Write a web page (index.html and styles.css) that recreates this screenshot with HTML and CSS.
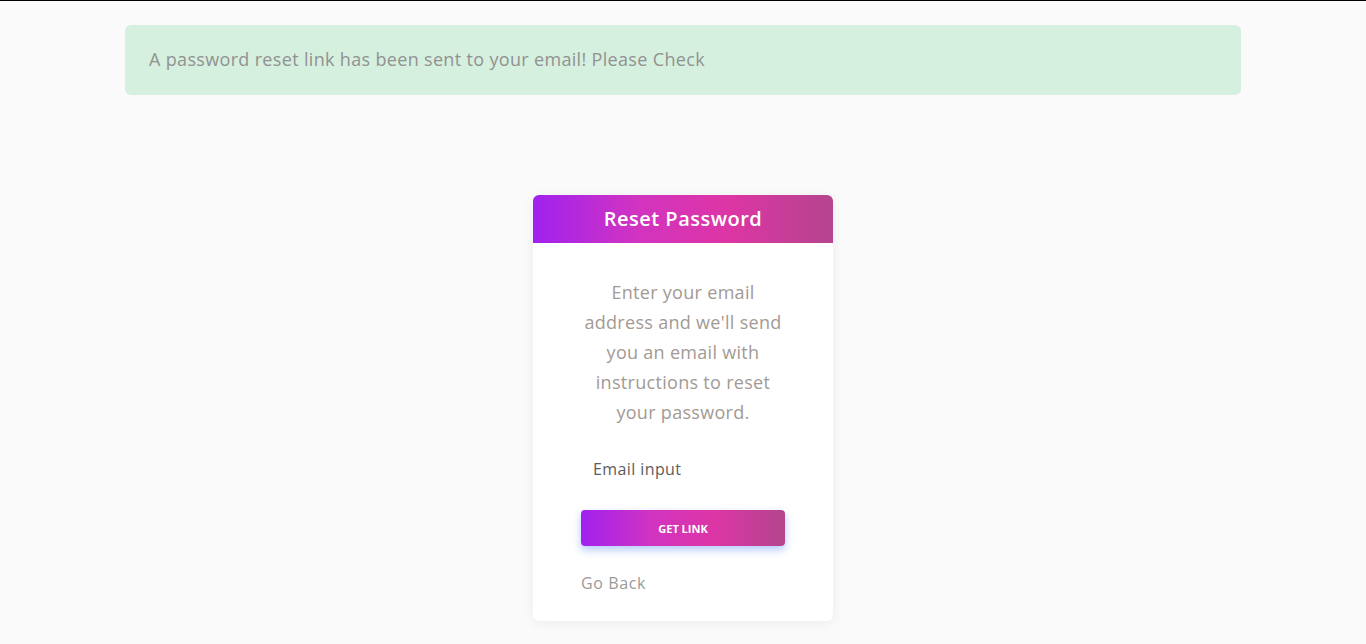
FILE: index.html
```html
<!DOCTYPE html>
<html lang="en">
<head>
<meta charset="utf-8">
<title>Reset Password</title>
<link rel="stylesheet" href="styles.css">
</head>
<body>
<div class="topline"></div>
<main class="page">
  <div class="alert">A password reset link has been sent to your email! Please Check</div>
  <section class="card">
    <header class="card-head">Reset Password</header>
    <div class="card-body">
      <p class="intro">Enter your email<br>address and we'll send<br>you an email with<br>instructions to reset<br>your password.</p>
      <div class="field"><span class="field-label">Email input</span></div>
      <button class="btn" type="button">GET LINK</button>
      <a class="back" href="#">Go Back</a>
    </div>
  </section>
</main>
</body>
</html>
```
FILE: styles.css
```css
* { box-sizing: border-box; }
html, body { margin: 0; padding: 0; }
body {
  background: #fafafa;
  font-family: "Open Sans", "Noto Sans", sans-serif;
  height: 644px;
  overflow: hidden;
}
.topline { height: 1px; background: #000; }
.page {
  display: flex;
  flex-direction: column;
  align-items: center;
  padding-top: 24px;
}
.alert {
  width: 1116px;
  height: 70px;
  background: #d5f0de;
  border-radius: 6px;
  color: #929292;
  font-size: 18px;
  letter-spacing: 0.33px;
  padding: 0 24px 2px;
  display: flex;
  align-items: center;
}
.card {
  margin-top: 100px;
  width: 300px;
  background: #fff;
  border-radius: 6px;
  box-shadow: 0 2px 12px rgba(0,0,0,0.06);
  overflow: hidden;
}
.card-head {
  height: 48px;
  display: flex;
  align-items: center;
  justify-content: center;
  color: #fff;
  font-size: 20px;
  font-weight: 600;
  letter-spacing: 0.5px;
  padding-bottom: 2px;
  background: linear-gradient(90deg, #a021ef 0%, #d234c0 35%, #dd35a5 65%, #b4458e 100%);
}
.card-body {
  padding: 34px 48px 27px;
  display: flex;
  flex-direction: column;
}
.intro {
  margin: 0;
  text-align: center;
  color: #a29a94;
  font-size: 18px;
  letter-spacing: 0.3px;
  line-height: 30px;
}
.field {
  margin-top: 24px;
  height: 36px;
  padding: 0 12px;
  display: flex;
  align-items: center;
  color: #5c5c5c;
  font-size: 16px;
  letter-spacing: 0.4px;
}
.btn {
  margin-top: 23px;
  height: 36px;
  border: 0;
  border-radius: 4px;
  color: #fff;
  font-family: inherit;
  font-size: 11px;
  font-weight: 700;
  background: linear-gradient(90deg, #a021ef 0%, #d234c0 35%, #dd35a5 65%, #b4458e 100%);
  box-shadow: 0 4px 8px rgba(70, 120, 245, 0.4);
}
.back {
  margin-top: 26px;
  color: #9a9a9a;
  font-size: 16px;
  letter-spacing: 0.6px;
  text-decoration: none;
  align-self: flex-start;
}
```
